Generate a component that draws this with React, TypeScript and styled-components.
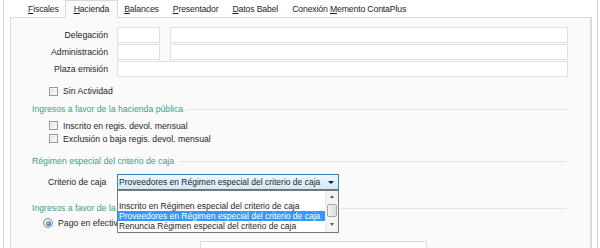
import React from 'react'
import styled, { createGlobalStyle } from 'styled-components'

const GlobalStyle = createGlobalStyle`
  body {
    margin: 0;
    background: #ffffff;
    font-family: "Liberation Sans", Arial, sans-serif;
    font-size: 8.7px;
    color: #1e1e1e;
  }
  * { box-sizing: border-box; }
`

const Page = styled.div`
    width: 600px;
    height: 248px;
    overflow: hidden;
    display: flex;
    background: #ffffff;
`
const Window = styled.div`
    margin-left: 3px;
    width: 595px;
    height: 248px;
    border-left: 1px solid #d4d4d4;
    border-right: 1px solid #d4d4d4;
    padding: 0 5px 0 6px;
    display: flex;
    flex-direction: column;
`
const TabStrip = styled.div`
    height: 20px;
    display: flex;
    align-items: flex-end;
    padding-left: 11px;
    position: relative;
    z-index: 1;
`
const Tab = styled.div<{ $active?: boolean }>`
    height: ${p => (p.$active ? '18px' : '15px')};
    margin: ${p => (p.$active ? '0 -1px -1px -1px' : '0')};
    padding: ${p => (p.$active ? '1px 8px 0 8px' : '0 7px')};
    line-height: 14px;
    letter-spacing: -0.15px;
    white-space: nowrap;
    background: ${p => (p.$active ? '#fafafa' : 'transparent')};
    border: ${p => (p.$active ? '1px solid #d9d9d9' : 'none')};
    border-bottom: none;
    u { text-decoration: underline; }
`
const Panel = styled.div`
    flex: 1;
    background: #fafafa;
    border: 1px solid #d9d9d9;
    border-right: 2px solid #dadada;
    padding: 9px 22px 0 0;
    display: flex;
    flex-direction: column;
`
const FieldRow = styled.div`
    display: flex;
    align-items: center;
    height: 16px;
    margin-bottom: 1px;
`
const FieldLabel = styled.div`
    width: 97px;
    text-align: right;
    margin-right: 9px;
    white-space: nowrap;
`
const Input = styled.div<{ $w?: number }>`
    height: 16px;
    background: #ffffff;
    border: 1px solid #e0e0e0;
    ${p => (p.$w ? `width: ${p.$w}px; margin-right: 10px;` : 'flex: 1;')}
`
const CheckRow = styled.div<{ $mt: number; $h?: number }>`
    display: flex;
    align-items: center;
    height: ${p => p.$h ?? 14}px;
    margin-top: ${p => p.$mt}px;
    padding-left: 38px;
    white-space: nowrap;
`
const CheckBox = styled.span`
    width: 9px;
    height: 9px;
    margin-right: 5px;
    border: 1px solid #9a9a9a;
    background: linear-gradient(135deg, #dcdcdc, #f6f6f6 70%);
    box-shadow: inset 0 0 0 1px #f4f4f4;
`
const GroupTitle = styled.div<{ $mt: number }>`
    display: flex;
    align-items: center;
    height: 14px;
    margin-top: ${p => p.$mt}px;
    padding-left: 21px;
    margin-right: 1px;
    color: #3f9d8b;
    white-space: nowrap;
    &::after {
        content: '';
        flex: 1;
        height: 1px;
        margin-left: 4px;
        background: #e1e6ea;
    }
`
const ComboRow = styled.div`
    display: flex;
    align-items: center;
    height: 16px;
    margin-top: 6px;
    padding-left: 37px;
    position: relative;
    z-index: 2;
`
const ComboLabel = styled.div`
    width: 69px;
    white-space: nowrap;
`
const Combo = styled.div`
    position: relative;
    width: 222px;
    height: 16px;
    border: 1px solid #3c7fb1;
    background: linear-gradient(#eef7fd, #d3eafa);
    display: flex;
    align-items: center;
    padding-left: 1px;
    white-space: nowrap;
    font-size: 8.5px;
`
const ComboText = styled.span`
    flex: 1;
    overflow: hidden;
`
const ArrowDown = styled.span<{ $c?: string; $w?: number }>`
    width: 0;
    height: 0;
    border-left: ${p => (p.$w ?? 6) / 2}px solid transparent;
    border-right: ${p => (p.$w ?? 6) / 2}px solid transparent;
    border-top: 3px solid ${p => p.$c ?? '#1a1a1a'};
`
const ArrowUp = styled.span`
    width: 0;
    height: 0;
    border-left: 2.5px solid transparent;
    border-right: 2.5px solid transparent;
    border-bottom: 3px solid #606060;
`
const ComboArrow = styled.div`
    width: 12px;
    display: flex;
    justify-content: center;
    margin-right: 1px;
`
const DropList = styled.div`
    position: absolute;
    top: 15px;
    left: -1px;
    width: 222px;
    height: 43px;
    background: #ffffff;
    border: 1px solid #7a7a7a;
    display: flex;
`
const Items = styled.div`
    flex: 1;
    display: flex;
    flex-direction: column;
`
const Item = styled.div<{ $sel?: boolean }>`
    height: 10px;
    line-height: 10px;
    padding-left: 1px;
    white-space: nowrap;
    overflow: hidden;
    background: ${p => (p.$sel ? '#3399ff' : 'transparent')};
    color: ${p => (p.$sel ? '#ffffff' : '#1e1e1e')};
`
const BlankItem = styled.div`
    height: 10px;
`
const ScrollBar = styled.div`
    width: 13px;
    background: #f3f3f3;
    border-left: 1px solid #ececec;
    display: flex;
    flex-direction: column;
    align-items: center;
`
const ScrollBtn = styled.div`
    height: 11px;
    width: 100%;
    display: flex;
    align-items: center;
    justify-content: center;
`
const Thumb = styled.div`
    width: 10px;
    height: 13px;
    margin: 2px 0;
    border: 1px solid #a9a9a9;
    border-radius: 2px;
    background: linear-gradient(to right, #f4f4f4, #dedede);
`
const RadioRow = styled.div`
    display: flex;
    align-items: center;
    height: 14px;
    margin-top: 1px;
    padding-left: 32px;
    white-space: nowrap;
`
const Radio = styled.span`
    width: 10px;
    height: 10px;
    border-radius: 50%;
    border: 1px solid #8e8f8f;
    background: #e8e8e8;
    margin-right: 5px;
    display: flex;
    align-items: center;
    justify-content: center;
    &::after {
        content: '';
        width: 5px;
        height: 5px;
        border-radius: 50%;
        background: radial-gradient(circle at 40% 35%, #9ad4f7, #1f64b0 80%);
    }
`
const BottomRow = styled.div`
    margin-top: 11px;
    padding-left: 189px;
`
const BottomBox = styled.div`
    width: 227px;
    height: 16px;
    background: #ffffff;
    border: 1px solid #dcdcdc;
`

const App = () => {
  return (
    <Page>
      <GlobalStyle />
      <Window>
        <TabStrip>
          <Tab><u>F</u>iscales</Tab>
          <Tab $active><u>H</u>acienda</Tab>
          <Tab><u>B</u>alances</Tab>
          <Tab><u>P</u>resentador</Tab>
          <Tab><u>D</u>atos Babel</Tab>
          <Tab>Conexión <u>M</u>emento ContaPlus</Tab>
        </TabStrip>
        <Panel>
          <FieldRow>
            <FieldLabel>Delegación</FieldLabel>
            <Input $w={43} />
            <Input />
          </FieldRow>
          <FieldRow>
            <FieldLabel>Administración</FieldLabel>
            <Input $w={43} />
            <Input />
          </FieldRow>
          <FieldRow>
            <FieldLabel>Plaza emisión</FieldLabel>
            <Input />
          </FieldRow>

          <CheckRow $mt={6}>
            <CheckBox />Sin Actividad
          </CheckRow>

          <GroupTitle $mt={4}>Ingresos a favor de la hacienda pública</GroupTitle>
          <CheckRow $mt={3} $h={13}>
            <CheckBox />Inscrito en regis. devol. mensual
          </CheckRow>
          <CheckRow $mt={0} $h={13}>
            <CheckBox />Exclusión o baja regis. devol. mensual
          </CheckRow>

          <GroupTitle $mt={9}>Régimen especial del criterio de caja</GroupTitle>
          <ComboRow>
            <ComboLabel>Criterio de caja</ComboLabel>
            <Combo>
              <ComboText>Proveedores en Régimen especial del criterio de caja</ComboText>
              <ComboArrow><ArrowDown /></ComboArrow>
              <DropList>
                <Items>
                  <BlankItem />
                  <Item>Inscrito en Régimen especial del criterio de caja</Item>
                  <Item $sel>Proveedores en Régimen especial del criterio de caja</Item>
                  <Item>Renuncia Régimen especial del criterio de caja</Item>
                </Items>
                <ScrollBar>
                  <ScrollBtn><ArrowUp /></ScrollBtn>
                  <Thumb />
                  <ScrollBtn><ArrowDown $c="#606060" $w={5} /></ScrollBtn>
                </ScrollBar>
              </DropList>
            </Combo>
          </ComboRow>

          <GroupTitle $mt={11}>Ingresos a favor de la Hacienda Pública</GroupTitle>
          <RadioRow>
            <Radio />Pago en efectivo
          </RadioRow>
          <BottomRow>
            <BottomBox />
          </BottomRow>
        </Panel>
      </Window>
    </Page>
  )
}

export default App
